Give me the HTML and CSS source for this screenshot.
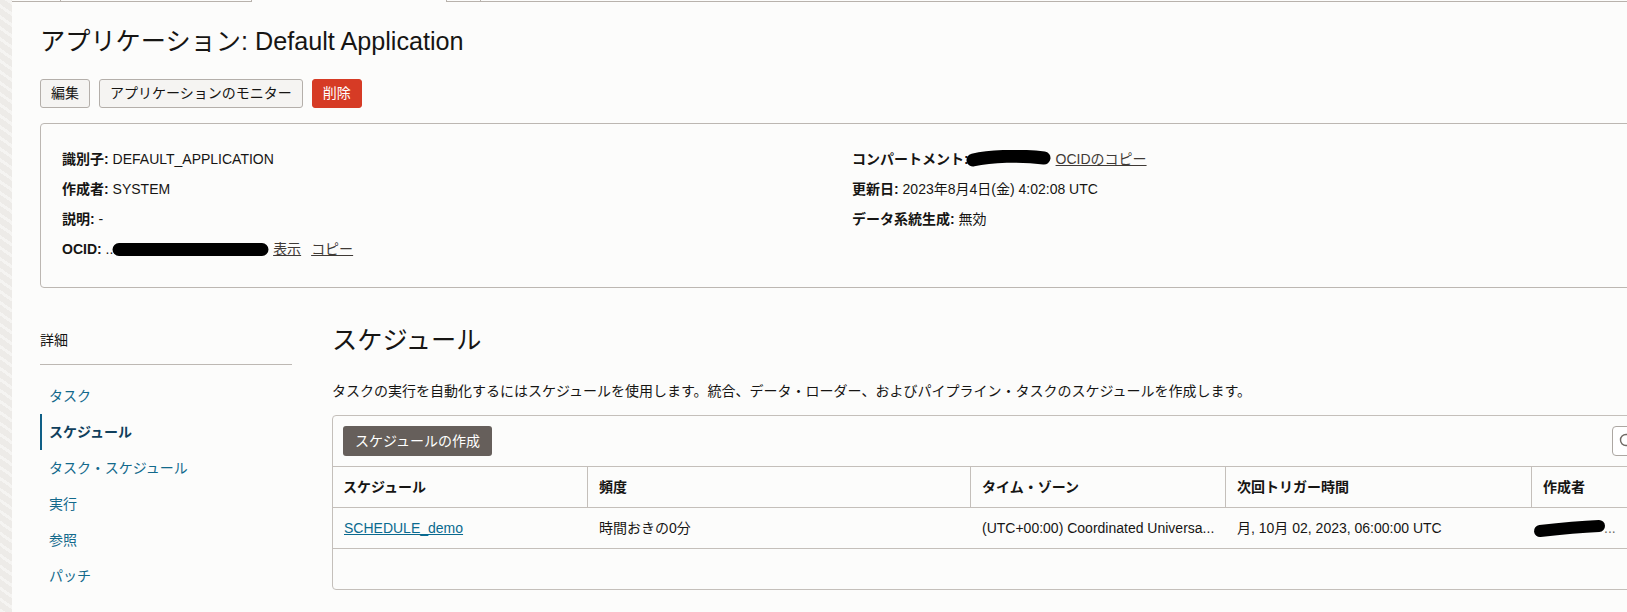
FILE: index.html
```html
<!DOCTYPE html>
<html lang="ja">
<head>
<meta charset="utf-8">
<title>アプリケーション: Default Application</title>
<link rel="stylesheet" href="styles.css">
</head>
<body>
<div class="page">
  <div class="strip"></div>
  <div class="main">
    <div class="tabs">
      <div class="tab t1"></div>
      <div class="tab t2"></div>
      <div class="tab-gap"></div>
      <div class="tab t3"></div>
      <div class="tab t4"></div>
    </div>
    <div class="content">
      <h1 class="title">アプリケーション: Default Application</h1>
      <div class="actions">
        <button class="btn">編集</button>
        <button class="btn">アプリケーションのモニター</button>
        <button class="btn btn-danger">削除</button>
      </div>

      <div class="info">
        <div class="info-col">
          <div class="row"><span class="lbl">識別子:</span> DEFAULT_APPLICATION</div>
          <div class="row"><span class="lbl">作成者:</span> SYSTEM</div>
          <div class="row"><span class="lbl">説明:</span> -</div>
          <div class="row"><span class="lbl">OCID:</span> <span class="ocid">...</span><svg class="blob blob-ocid" width="157" height="16" viewBox="0 0 157 16"><path d="M7 2 H150 A6.5 6.5 0 0 1 150 15 H7 A6.5 6.5 0 0 1 7 2 Z" fill="#000"/></svg> <a class="ilink" href="#">表示</a><a class="ilink gap" href="#">コピー</a></div>
        </div>
        <div class="info-col">
          <div class="row"><span class="lbl">コンパートメント:</span><svg class="blob blob-comp" width="86" height="18" viewBox="0 0 86 18"><path d="M7 10 C 25 6, 55 5, 78 8" stroke="#000" stroke-width="13" stroke-linecap="round" fill="none"/></svg> <a class="ilink" href="#">OCIDのコピー</a></div>
          <div class="row"><span class="lbl">更新日:</span> 2023年8月4日(金) 4:02:08 UTC</div>
          <div class="row"><span class="lbl">データ系統生成:</span> 無効</div>
        </div>
      </div>

      <div class="lower">
        <nav class="side">
          <div class="side-title">詳細</div>
          <div class="nav">
            <a class="nav-item" href="#">タスク</a>
            <a class="nav-item active" href="#">スケジュール</a>
            <a class="nav-item" href="#">タスク・スケジュール</a>
            <a class="nav-item" href="#">実行</a>
            <a class="nav-item" href="#">参照</a>
            <a class="nav-item" href="#">パッチ</a>
          </div>
        </nav>

        <section class="sched">
          <h2 class="sched-title">スケジュール</h2>
          <p class="desc">タスクの実行を自動化するにはスケジュールを使用します。統合、データ・ローダー、およびパイプライン・タスクのスケジュールを作成します。</p>
          <div class="panel">
            <div class="toolbar">
              <button class="create">スケジュールの作成</button>
              <div class="search">
                <svg class="search-ico" width="16" height="16" viewBox="0 0 16 16"><circle cx="7" cy="7" r="5.5" fill="none" stroke="#6f6964" stroke-width="1.4"/><path d="M11 11 L15 15" stroke="#6f6964" stroke-width="1.4"/></svg>
              </div>
            </div>
            <div class="grid">
              <div class="th">スケジュール</div>
              <div class="th">頻度</div>
              <div class="th">タイム・ゾーン</div>
              <div class="th">次回トリガー時間</div>
              <div class="th last">作成者</div>

              <div class="td"><a class="tlink" href="#">SCHEDULE_demo</a></div>
              <div class="td">時間おきの0分</div>
              <div class="td">(UTC+00:00) Coordinated Universa...</div>
              <div class="td">月, 10月 02, 2023, 06:00:00 UTC</div>
              <div class="td creator"><svg class="blob blob-creator" width="74" height="20" viewBox="0 0 74 20"><path d="M7 13 C 25 11, 45 9, 66 8" stroke="#000" stroke-width="12" stroke-linecap="round" fill="none"/></svg><span class="dots">...</span></div>
            </div>
            <div class="empty"></div>
          </div>
        </section>
      </div>
    </div>
  </div>
</div>
</body>
</html>
```

FILE: styles.css
```css
html, body {
  margin: 0;
  padding: 0;
}
body {
  background: #fcfcfb;
  color: #161513;
  font-family: "Liberation Sans", "Noto Sans CJK JP", sans-serif;
  font-size: 14px;
  line-height: 20px;
}
.page {
  display: flex;
  width: 1627px;
  height: 612px;
  overflow: hidden;
}
.strip {
  flex: none;
  width: 12px;
  background: #edebe8;
  background-image: repeating-linear-gradient(35deg, rgba(255,255,255,0.45) 0 3px, rgba(0,0,0,0) 3px 9px);
}
.main {
  flex: none;
  width: 1811px;
}
.tabs {
  display: flex;
  height: 2px;
}
.tab {
  box-sizing: border-box;
  height: 2px;
  border-bottom: 1px solid #b8b2ac;
}
.t1 { width: 49px; border-right: 1px solid #b8b2ac; }
.t2 { width: 191px; border-right: 1px solid #b8b2ac; }
.tab-gap { width: 194px; }
.t3 { width: 35px; border-left: 1px solid #b8b2ac; border-right: 1px solid #b8b2ac; }
.t4 { flex: 1; }

.content {
  padding-left: 28px;
}
.title {
  margin: 24px 0 0;
  font-size: 25.2px;
  line-height: 30px;
  font-weight: 400;
  white-space: nowrap;
}
.actions {
  display: flex;
  gap: 9px;
  margin-top: 23px;
}
.btn {
  box-sizing: border-box;
  height: 29px;
  padding: 0 10px;
  border: 1px solid #b4afaa;
  border-radius: 3px;
  background: #f5f4f2;
  color: #161513;
  font-family: inherit;
  font-size: 14px;
  line-height: 27px;
}
.btn-danger {
  background: #d63b25;
  border-color: #d63b25;
  color: #ffffff;
}

.info {
  display: grid;
  grid-template-columns: 790px 1fr;
  margin-top: 15px;
  padding: 20px 21px 23px;
  border: 1px solid #bcb7b2;
  border-radius: 4px;
}
.row {
  height: 30px;
  line-height: 30px;
  white-space: nowrap;
}
.lbl {
  font-weight: 700;
}
.blob {
  vertical-align: middle;
}
.ocid {
  color: #161513;
}
.blob-ocid {
  margin-left: -5px;
  position: relative;
  top: -1px;
}
.blob-comp {
  margin-left: -3px;
  position: relative;
  top: -1px;
}
.ilink {
  color: #3f3a36;
  text-decoration: underline;
}
.ilink.gap {
  margin-left: 10px;
}

.lower {
  display: flex;
  gap: 40px;
  margin-top: 34px;
}
.side {
  flex: none;
  width: 252px;
}
.side-title {
  line-height: 36px;
  padding-bottom: 6px;
  border-bottom: 1px solid #bdb8b3;
}
.nav {
  margin-top: 13px;
}
.nav-item {
  display: block;
  height: 36px;
  line-height: 36px;
  padding-left: 7px;
  border-left: 2px solid transparent;
  color: #12698b;
  text-decoration: none;
  white-space: nowrap;
}
.nav-item.active {
  border-left-color: #0f5f86;
  color: #103f5c;
  font-weight: 700;
}

.sched {
  flex: none;
  width: 1491px;
}
.sched-title {
  margin: 0;
  font-size: 25.2px;
  line-height: 36px;
  font-weight: 400;
}
.desc {
  margin: 23px 0 0;
  line-height: 20px;
  white-space: nowrap;
}
.panel {
  margin-top: 14px;
  border: 1px solid #c4bfba;
  border-radius: 4px;
}
.toolbar {
  display: flex;
  justify-content: space-between;
  padding: 10px;
}
.create {
  height: 30px;
  padding: 0 12px;
  border: 0;
  border-radius: 3px;
  background: #665f5b;
  color: #ffffff;
  font-family: inherit;
  font-size: 14px;
  line-height: 30px;
}
.search {
  box-sizing: border-box;
  display: flex;
  align-items: center;
  width: 200px;
  height: 30px;
  padding-left: 6px;
  border: 1px solid #aca7a2;
  border-radius: 4px;
  background: #ffffff;
}
.grid {
  display: grid;
  grid-template-columns: 255px 383px 255px 306px 1fr;
}
.th, .td {
  box-sizing: border-box;
  padding: 0 11px;
  white-space: nowrap;
  overflow: hidden;
}
.th {
  height: 42px;
  line-height: 40px;
  border-top: 1px solid #c4bfba;
  border-bottom: 1px solid #c4bfba;
  border-right: 1px solid #c4bfba;
  font-weight: 700;
}
.th:first-child {
  padding-left: 10px;
}
.th.last {
  border-right: 0;
}
.td {
  height: 41px;
  line-height: 40px;
  border-bottom: 1px solid #c4bfba;
}
.tlink {
  color: #0a6a8f;
  text-decoration: underline;
}
.creator {
  overflow: visible;
}
.blob-creator {
  margin-left: -10px;
  position: relative;
  top: -1px;
}
.dots {
  color: #6f6964;
  margin-left: -3px;
}
.empty {
  height: 40px;
}
```
